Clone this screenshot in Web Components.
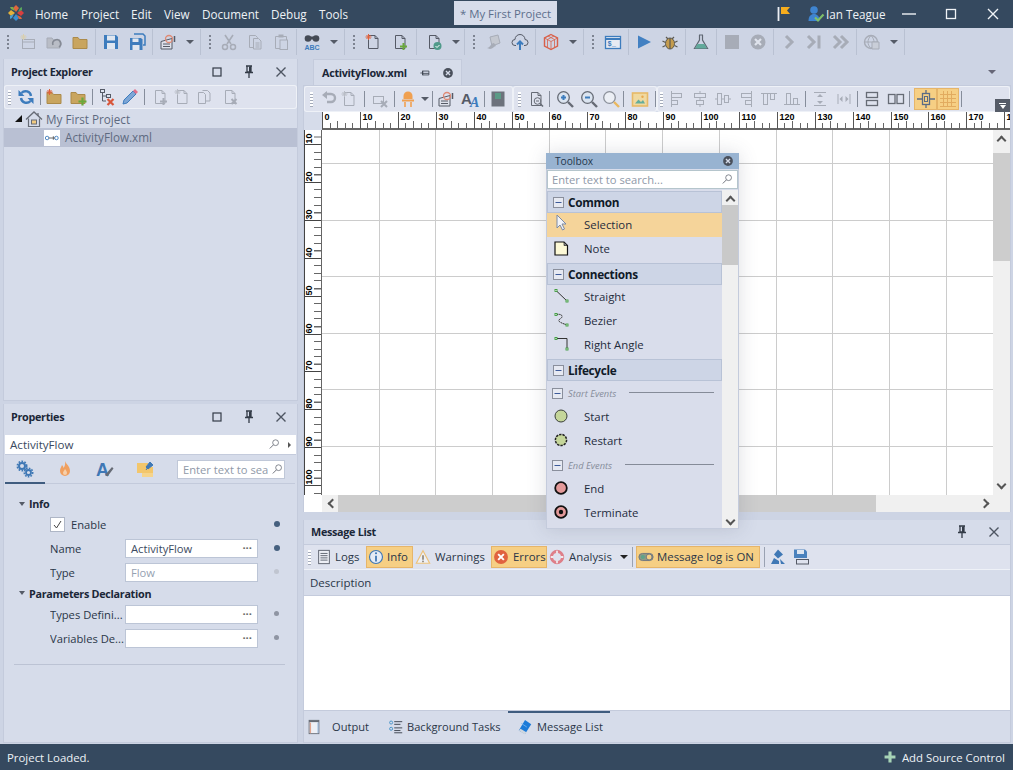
<!DOCTYPE html>
<html lang="en"><head><meta charset="utf-8"><title>Activity Flow</title>
<style>
html,body{margin:0;padding:0;height:100%;overflow:hidden;background:#cdd4e4}
body{font:12px "Open Sans","Noto Sans",sans-serif;color:#1f2c3d}
</style></head>
<body>
<x-app>
  <x-titlebar slot="top"></x-titlebar>
  <x-toolbar slot="top" u="26" bg="#cdd4e4" h="28" items="g:15 newproj openp folder | save saveall | recdoc a:17 | g cut copy paste | find a:17 | g new addfile:28 | checkdoc:30 a:13 | g:14 bugs cloud | cube a:17 | g:14 term | play bug | flask | stop cancel | next stepend fast | globe a:17 |"></x-toolbar>
  <x-panel slot="left" title="Project Explorer" style="height:342px">
    <x-toolbar u="24" bg="#dee2ee" h="24" round items="g:10 refresh:24 s:4 fnew:23 fadd:26 s:3 treex:26 pencil:20 s:8 dadd:24 dnew:20 dcopy:24 ddel:28"></x-toolbar>
    <x-tree></x-tree>
  </x-panel>
  <x-panel slot="left" title="Properties" style="height:339px;margin-top:3px">
    <x-props></x-props>
  </x-panel>
  <x-doc slot="right"></x-doc>
  <x-panel slot="right" title="Message List" nomax hh="24" style="height:223px;margin-top:8px"><x-messages></x-messages></x-panel>
  <x-status slot="bottom"></x-status>
  <x-toolbox slot="float">
    <x-tb-group label="Common"></x-tb-group>
    <x-tb-item icon="cursor" label="Selection" active></x-tb-item>
    <x-tb-item icon="note" label="Note"></x-tb-item>
    <x-tb-group label="Connections" gap></x-tb-group>
    <x-tb-item icon="straight" label="Straight"></x-tb-item>
    <x-tb-item icon="bezier" label="Bezier"></x-tb-item>
    <x-tb-item icon="rightangle" label="Right Angle"></x-tb-item>
    <x-tb-group label="Lifecycle" gap></x-tb-group>
    <x-tb-sub label="Start Events"></x-tb-sub>
    <x-tb-item icon="start" label="Start"></x-tb-item>
    <x-tb-item icon="restart" label="Restart"></x-tb-item>
    <x-tb-sub label="End Events"></x-tb-sub>
    <x-tb-item icon="end" label="End"></x-tb-item>
    <x-tb-item icon="terminate" label="Terminate"></x-tb-item>
  </x-toolbox>
</x-app>
<script>
const g='#a7acb7',d='#6c7280',b='#3d7cbd',fo='#c9a55f';
const st=(c,w=1)=>`fill="none" stroke="${c}" stroke-width="${w}"`;
const doc=c=>`<path d="M4.5 2.5h6.5l3 3v10h-9.5z" ${st(c)}/><path d="M11 2.5v3h3" ${st(c)}/>`;
const spark=(c='#e0603a')=>`<path d="M4.5 1v6M1.5 4h6M2.5 2l4 4M6.5 2l-4 4" ${st(c)}/>`;
const folder=(f=fo)=>`<path d="M2 4.5h5l1.5 2H16v9H2z" fill="${f}" stroke="#ab8a4a"/>`;
const sq=(x,y)=>`<rect x="${x}" y="${y}" width="2" height="2" fill="#fff" stroke="#3a9a3a" stroke-width=".9"/>`;
const ICONS={
newproj:`<rect x="3.5" y="6.5" width="12" height="9" ${st(g)}/><path d="M3.5 9h12" ${st(g)}/>`+spark('#d9cfae'),
openp:`<path d="M2 5h5l1.5 2H15v8H2z" fill="#b9bdc6" stroke="${g}"/><path d="M8 12a4 4 0 1 1 6 2" ${st('#858a95',1.6)}/>`,
folder:folder(),
save:`<path d="M2 2h12l2 2v12H2z" fill="${b}"/><rect x="5" y="2.5" width="8" height="5" fill="#dfe6f0"/><rect x="5" y="10" width="8" height="6" fill="#dfe6f0"/>`,
saveall:`<path d="M6 1h9l2 2v9h-2" ${st(b,1.5)}/><path d="M2 5h11l1.5 1.5V17H2z" fill="${b}"/><rect x="4.5" y="5.5" width="6" height="3.5" fill="#dfe6f0"/><rect x="4.5" y="12" width="7" height="5" fill="#dfe6f0"/>`,
recdoc:`<path d="M2 8.5l11-3V16H2z" fill="#dde1eb" stroke="#555a66"/><path d="M4 11h7M4 13.5h7" ${st('#555a66')}/><circle cx="10" cy="6" r="3.5" ${st('#e08a74',1.3)}/><path d="M15.5 3v6" ${st('#555a66',1.5)}/>`,
cut:`<path d="M5 2l6 9M13 2L7 11" ${st(g,1.6)}/><circle cx="5" cy="14" r="2.5" ${st(g,1.5)}/><circle cx="13" cy="14" r="2.5" ${st(g,1.5)}/>`,
copy:`<path d="M3.5 2.5h6l2 2v10h-8z" ${st(g)}/><path d="M7.5 5.5h5l2.5 2.5v8h-7.5z" fill="#cdd4e4" stroke="${g}"/><path d="M9.5 10h4M9.5 12h4M9.5 14h4" ${st(g)}/>`,
paste:`<path d="M3.5 3.5h11v12h-11z" ${st(g)}/><rect x="6.5" y="1.5" width="5" height="3" fill="${g}"/><rect x="8" y="7" width="7.5" height="9.5" fill="#cdd4e4" stroke="${g}"/>`,
find:`<circle cx="5" cy="5.5" r="3.3" fill="#444a55"/><circle cx="13" cy="5.5" r="3.3" fill="#444a55"/><rect x="7.5" y="3.5" width="3" height="3" fill="#444a55"/><text x="9" y="16.5" text-anchor="middle" font-family="Liberation Sans" font-weight="700" font-size="7" fill="${b}">ABC</text>`,
new:doc('#555a66')+spark(),
addfile:doc('#555a66')+`<path d="M12.5 10v7M9 13.5h7" ${st('#6aa83c',2)}/>`,
checkdoc:doc('#555a66')+`<circle cx="12.5" cy="13" r="4" fill="#4f9a8a"/><path d="M10.5 13l1.5 1.5 2.5-2.5" ${st('#fff')}/>`,
bugs:`<path d="M5 4l8-2 2 8-8 3z" fill="#c4c8d0" stroke="${g}"/><path d="M2 15c3 0 4-5 7-5l2 3c-2 0-3 3-6 3z" fill="${g}"/>`,
cloud:`<path d="M5 12.5H4a3 3 0 0 1 0-6 5 5 0 0 1 10 0 3 3 0 0 1 0 6h-1" ${st('#555a66')}/><path d="M9 17V9M6 11.5l3-3 3 3" ${st(b,2)}/>`,
cube:`<path d="M9 1.5l6.5 3.5v8L9 16.5 2.5 13V5z" ${st('#d8604a',1.4)}/><path d="M2.5 5L9 8.5 15.5 5M9 8.5v8M6 3l6.5 3.5v8M12 3L5.5 6.5v8" ${st('#d8604a',.8)}/>`,
term:`<rect x="1.5" y="3.5" width="15" height="12" fill="#e6eaf2" stroke="${b}" stroke-width="1.3"/><path d="M1.5 6h15" ${st(b,2)}/><text x="3.5" y="13" font-family="Liberation Mono" font-weight="700" font-size="7" fill="${b}">$_</text>`,
play:`<path d="M3 2.5l13 6.5-13 6.5z" fill="#4280c2"/>`,
bug:`<ellipse cx="9" cy="10.5" rx="4.5" ry="5.5" fill="#c59c4d" stroke="#5c5a52"/><path d="M9 5v11M5 4l2 2M13 4l-2 2M1.5 8l3 1.5M16.5 8l-3 1.5M1.5 14l3-1.5M16.5 14l-3-1.5" ${st('#5c5a52',1.2)}/>`,
flask:`<path d="M7 2h4M7.5 2v5L2.5 15.5h13L10.5 7V2" ${st('#5f6672',1.2)}/><path d="M5.5 11h7l2.5 4.5H3z" fill="#61a99b"/>`,
stop:`<rect x="2" y="2" width="14" height="14" fill="${g}"/>`,
cancel:`<circle cx="9" cy="9" r="7.5" fill="${g}"/><path d="M6 6l6 6M12 6l-6 6" ${st('#dfe3ec',2.2)}/>`,
next:`<path d="M6 3l6 6-6 6" ${st(g,3)}/>`,
stepend:`<path d="M2 3l6 6-6 6" ${st(g,3)}/><path d="M13 2.5v13" ${st(g,3)}/>`,
fast:`<path d="M2 3l6 6-6 6M9 3l6 6-6 6" ${st(g,3)}/>`,
globe:`<circle cx="8" cy="9" r="6.5" ${st(g,1.4)}/><path d="M2 9h12M8 2.5c-4 4-4 9 0 13M8 2.5c4 4 4 9 0 13" ${st(g)}/><path d="M9 9h7v7H9z" fill="#c9ced8" stroke="${g}"/>`,
refresh:`<path d="M14 8a5.5 5.5 0 0 0-9.5-3" ${st(b,2.4)}/><path d="M4 10a5.5 5.5 0 0 0 9.5 3" ${st(b,2.4)}/><path d="M1.5 2v6h6zM16.5 16v-6h-6z" fill="${b}"/>`,
fnew:folder()+spark(),
fadd:folder()+`<path d="M13.5 9.5v8M9.5 13.5h8" ${st('#6aa83c',2.2)}/>`,
treex:`<rect x="2.5" y="1.5" width="4" height="3" ${st('#555a66')}/><rect x="8.5" y="6.5" width="4" height="3" ${st('#555a66')}/><path d="M4.5 4.5V13H8M4.5 8h4" ${st('#555a66')}/><path d="M9.5 11l6 6M15.5 11l-6 6" ${st('#d8563a',2.2)}/>`,
pencil:`<path d="M2 16l1-4L12 3l3 3-9 9z" fill="#7da6d6" stroke="${b}"/><path d="M12 3l2-2 3 3-2 2z" fill="#e2708a"/>`,
dadd:doc(g)+`<path d="M12.5 10v7M9 13.5h7" ${st(g,2)}/>`,
dnew:doc(g)+spark('#b9bdc6'),
dcopy:`<path d="M3.5 4.5h5l2 2v9h-7z" ${st(g)}/><path d="M7.5 2.5h5l2.5 2.5v8h-4" ${st(g)}/>`,
ddel:doc(g)+`<path d="M10.5 11l5 5M15.5 11l-5 5" ${st(g,2)}/>`,
undo:`<path d="M6 4h6a4 4 0 0 1 0 8H8" ${st(g,2.4)}/><path d="M8 0.5L3 4.5l5 4z" fill="${g}" transform="translate(0,.5)"/>`,
connx:`<rect x="2.5" y="6.5" width="10" height="7" ${st(g)}/><path d="M10 11l6 6M16 11l-6 6" ${st(g,2)}/>`,
bulb:`<path d="M4.5 9V6a4.5 4.5 0 0 1 9 0v3z" fill="#f0a050"/><rect x="3" y="9.5" width="12" height="2" fill="#f0a050"/><path d="M6 12v5M12 12v5" ${st('#f0a050',1.6)}/>`,
font:`<text x="0" y="14" font-family="Liberation Sans" font-weight="700" font-size="15" fill="#555a66">A</text><text x="9" y="17" font-family="Liberation Serif" font-style="italic" font-weight="700" font-size="14" fill="${b}">A</text>`,
book:`<rect x="2.5" y="1.5" width="13" height="15" fill="#6d727c"/><rect x="6" y="3" width="6" height="6" fill="#5b9a86"/>`,
zdoc:doc('#666b75')+`<circle cx="10.5" cy="11" r="3.3" fill="#dee2ee" stroke="#666b75"/><path d="M13 13.5l3 3" ${st('#666b75',1.6)}/><path d="M9 11h3" ${st('#666b75')}/>`,
zin:`<circle cx="7.5" cy="7.5" r="5.8" fill="#dbe4f0" stroke="#666b75" stroke-width="1.3"/><path d="M5 7.5h5M7.5 5v5" ${st(b,2)}/><path d="M12 12l5 5" ${st('#666b75',2.4)}/>`,
zout:`<circle cx="7.5" cy="7.5" r="5.8" fill="#dbe4f0" stroke="#666b75" stroke-width="1.3"/><path d="M5 7.5h5" ${st(b,2)}/><path d="M12 12l5 5" ${st('#666b75',2.4)}/>`,
zm:`<circle cx="7.5" cy="7.5" r="5.8" fill="#eceff5" stroke="#8c919b" stroke-width="1.3"/><path d="M12 12l5 5" ${st('#eab85f',2.4)}/>`,
pic:`<rect x="1.5" y="3" width="15" height="13" fill="#f0d9a0" stroke="#e7b968" stroke-width="1.6"/><path d="M4 13.5l3.5-4 2.5 2.5 2-2 2 3.5z" fill="#64ad9c"/><circle cx="11.5" cy="6.8" r="1.2" fill="#e8a84e"/>`,
al:`<path d="M3.5 1v16" ${st(g)}/><rect x="3.5" y="3.5" width="10" height="4" ${st(g)}/><rect x="3.5" y="10.5" width="6" height="4" ${st(g)}/>`,
ac:`<path d="M9 1v16" ${st(g)}/><rect x="3.5" y="3.5" width="11" height="4" fill="#dee2ee" stroke="${g}"/><rect x="5.5" y="10.5" width="7" height="4" fill="#dee2ee" stroke="${g}"/>`,
am:`<path d="M1 9h16" ${st(g)}/><rect x="3.5" y="3.5" width="4" height="11" fill="#dee2ee" stroke="${g}"/><rect x="10.5" y="5.5" width="4" height="7" fill="#dee2ee" stroke="${g}"/>`,
ar:`<path d="M14.5 1v16" ${st(g)}/><rect x="4.5" y="3.5" width="10" height="4" ${st(g)}/><rect x="8.5" y="10.5" width="6" height="4" ${st(g)}/>`,
at:`<path d="M1 3.5h16" ${st(g)}/><rect x="3.5" y="3.5" width="4" height="11" ${st(g)}/><rect x="10.5" y="3.5" width="4" height="6" ${st(g)}/>`,
ab:`<path d="M1 14.5h16" ${st(g)}/><rect x="3.5" y="3.5" width="4" height="11" ${st(g)}/><rect x="10.5" y="8.5" width="4" height="6" ${st(g)}/>`,
vd:`<path d="M3 2.5h12M3 15.5h12" ${st(g)}/><path d="M9 4l-3 3h6zM9 14l-3-3h6z" fill="${g}"/>`,
hd:`<path d="M3 4v10M15 4v10" ${st(g)}/><path d="M4.5 9l3-3v6zM13.5 9l-3-3v6z" fill="${g}"/>`,
r2:`<rect x="3.5" y="2.5" width="11" height="5" ${st('#666b75',1.3)}/><rect x="3.5" y="10.5" width="11" height="5" ${st('#666b75',1.3)}/>`,
c2:`<rect x="1.5" y="4.5" width="6.5" height="9" ${st('#666b75',1.3)}/><rect x="10" y="4.5" width="6.5" height="9" ${st('#666b75',1.3)}/>`,
snap:`<rect x="5.5" y="3.5" width="7" height="11" ${st('#5b6c85',1.3)}/><rect x="7.5" y="6.5" width="3" height="5" ${st('#5b6c85')}/><path d="M9 0v3.5M9 14.5V18M0 9h5.5M12.5 9H18" ${st('#5b6c85',1.3)}/>`,
grid:`<path d="M1 4.5h16M1 8.5h16M1 12.5h16M1 16.5h16M4.5 1v16M8.5 1v16M12.5 1v16" ${st('#e2ab5f')}/>`,
search:`<circle cx="10.5" cy="6.5" r="4" ${st('#666b75',1.1)}/><path d="M7.5 9.5l-5 5" ${st('#666b75',1.3)}/>`,
gears:`<circle cx="6" cy="6" r="3" ${st('#3f78b5',2)}/><circle cx="6" cy="6" r="4.7" fill="none" stroke="#3f78b5" stroke-width="1.6" stroke-dasharray="1.7 1.3"/><circle cx="12.5" cy="12.5" r="2.5" ${st('#3f78b5',1.8)}/><circle cx="12.5" cy="12.5" r="4.2" fill="none" stroke="#3f78b5" stroke-width="1.6" stroke-dasharray="1.6 1.2"/>`,
flame:`<path d="M9 1c1 3 5 5 5 10a5 5 0 0 1-10 0c0-3 1.5-4 2-6 1 1 1.5 2 1.5 3C9 6 9.5 3.5 9 1z" fill="#f0a060"/><path d="M9 9c1 1.5 2 2.5 2 4a2 2 0 0 1-4 0c0-1.5 1.5-2.5 2-4z" fill="#f7d0aa"/>`,
fontb:`<text x="0" y="16" font-family="Liberation Sans" font-weight="700" font-size="18" fill="#3f78b5">A</text><path d="M9 15l7-8 1.5 1.5-6 8z" fill="#666b75"/>`,
sticky:`<path d="M1 3h11v4h5v10H6v-4H1z" fill="#f3c66b"/><path d="M6 13h11v4H6z" fill="#f6d48b"/><path d="M10 7l4-5 3 3-5 4zM10 10l2-3" fill="#3f78b5" stroke="#3f78b5"/>`,
logs:`<rect x="3" y="1.5" width="12" height="15" fill="#eef0f6" stroke="#555a66"/><path d="M5 5h8M5 7.5h8M5 10h8M5 12.5h8" ${st('#555a66')}/>`,
info:`<circle cx="9" cy="9" r="7.3" fill="#e6ecf5" stroke="#3f78b5" stroke-width="1.3"/><path d="M9 7.5V14" ${st('#3f78b5',2)}/><circle cx="9" cy="4.8" r="1.2" fill="#3f78b5"/>`,
warn:`<path d="M9 2l7.5 14h-15z" fill="#eef0f6" stroke="#edc27a" stroke-width="1.3"/><path d="M9 7v5" ${st('#8a8172',1.8)}/><circle cx="9" cy="14" r="1" fill="#8a8172"/>`,
err:`<circle cx="9" cy="9" r="7.8" fill="#e0623f"/><path d="M5.8 5.8l6.4 6.4M12.2 5.8l-6.4 6.4" ${st('#fff',2.2)}/>`,
lifering:`<circle cx="9" cy="9" r="6" ${st('#e07f88',3)}/><path d="M9 1v4M9 13v4M1 9h4M13 9h4" ${st('#f0e9ec',2)}/><circle cx="9" cy="9" r="7.6" ${st('#d9707b',.8)}/>`,
toggle:`<rect x="1" y="5" width="16" height="8" rx="4" fill="#8d9a85" stroke="#6a7280"/><circle cx="12.5" cy="9" r="3.3" fill="#f6cf84" stroke="#6a7280"/><circle cx="5.5" cy="9" r="2.3" fill="#5ea38a"/>`,
broom:`<path d="M9 1.5l5 5-5 4-4-4z" fill="#3f78b5"/><path d="M11 11l5 5h-4zM2 16l3-6 5 3v3z" fill="#3f78b5"/>`,
savebox:`<path d="M2 1.5h11l2 2V10H2z" fill="#4b82bd"/><rect x="5" y="2" width="7" height="4" fill="#dfe6f0"/><rect x="4.5" y="11.5" width="12" height="4.5" fill="#dee2ee" stroke="#555a66"/>`,
output:`<rect x="3.5" y="1.5" width="11" height="15" fill="#eef0f6" stroke="#666b75"/><path d="M3.5 1.5h11v2h-11z" fill="#666b75"/><path d="M5 4v12" ${st('#e2a48c',1.4)}/><path d="M13.5 4v12" ${st('#8fb2dc',1)}/>`,
tasks:`<circle cx="3.5" cy="4" r="1.7" ${st('#3f8fc7')}/><circle cx="3.5" cy="11" r="1.7" ${st('#3f8fc7')}/><path d="M7 3h9M7 6h7M7 10h9M7 13h7M7 15.5h9" ${st('#444a55',1.1)}/>`,
mbook:`<path d="M2 13L9 1l7 5-7 11z" fill="#1d7bd8"/><path d="M2 13l7 4.5 1.5-2.5L4 11z" fill="#cfd6de"/><path d="M5 5l6 4" ${st('#70b5f0')}/>`,
house:`<path d="M1 9.5L9 2l8 7.5" ${st('#666b75',1.3)}/><path d="M3.5 8.5V16.5h11V8.5" ${st('#666b75',1.2)}/><rect x="6.5" y="10" width="5" height="4" fill="#f0ca80" stroke="#666b75"/><path d="M13 3v3" ${st('#666b75',1.3)}/>`,
flow:`<circle cx="3.5" cy="9" r="2" ${st(b)}/><circle cx="14" cy="9" r="2" ${st(b)}/><path d="M5.5 9H12" ${st('#555')}/><path d="M10.5 7v4" ${st('#555')}/>`,
cursor:`<path transform="translate(2,-1)" d="M3 1v13l3-3 2.500 5 2-1-2.500-5H12z" fill="#f2f4f8" stroke="#7b8aa6"/>`,
note:`<path d="M3 3h9l3.500 3.500V16H3z" fill="#fdf9d6" stroke="#111" stroke-width="1.2"/><path d="M12 3v3.500h3.500z" fill="#888" stroke="#111" stroke-width=".6"/>`,
straight:`<path d="M4 3.500L15 14" ${st('#333')}/>`+sq(3,2.5)+sq(14,13),
bezier:`<path d="M4 3.500c6-1 8 2 4 4.500-4 2.500 3 4.500 7 6" ${st('#333')} stroke-dasharray="2 .5"/>`+sq(3,2.5)+sq(14,13),
rightangle:`<path d="M4 3.500h11V14" ${st('#333')}/>`+sq(3,2.5)+sq(14,13),
start:`<circle cx="9" cy="9" r="6" fill="#c5d69a" stroke="#3a3f3a"/>`,
restart:`<circle cx="9" cy="9" r="5.600" fill="#c5d69a" stroke="#222" stroke-width="1.5" stroke-dasharray="2.4 1"/>`,
end:`<circle cx="9" cy="9" r="5.800" fill="#e49a9a" stroke="#111" stroke-width="1.8"/>`,
terminate:`<circle cx="9" cy="9" r="5.800" fill="#e49a9a" stroke="#111" stroke-width="1.8"/><circle cx="9" cy="9" r="2.2" fill="#111"/>`,
logo:`<path d="M9 1l3 3-3 4-3-4z" fill="#e0663c"/><path d="M17 9l-3 3-4-3 4-3z" fill="#d93f3f"/><path d="M9 17l-3-3 3-4 3 4z" fill="#3a8ecf"/><path d="M1 9l3-3 4 3-4 3z" fill="#e3b23a"/><path d="M3 3h3l2 4-4-2z" fill="#79ad4c"/><path d="M15 3v3l-4 2 2-4z" fill="#58a55c"/><path d="M15 15h-3l-2-4 4 2z" fill="#e0663c"/><path d="M3 15v-3l4-2-2 4z" fill="#4a9ed0"/>`,
flag:`<path d="M2.5 2v14" ${st('#eceff4',1.8)}/><path d="M5 2h9l-3 3.5 3 3.5H5z" fill="#f6ad1d"/>`,
user:`<circle cx="7" cy="5" r="3.8" fill="#3f84cf"/><path d="M1.5 16c0-5 2.5-7 5.5-7s5.5 2 5.5 7z" fill="#3f84cf"/><path d="M8 12.5l3 3 5.5-6" ${st('#7fc06a',2.2)}/>`,
min:`<path d="M2 9h14" ${st('#f0f3f7',1.4)}/>`,
max:`<rect x="4.5" y="4.5" width="9" height="9" ${st('#f0f3f7',1.3)}/>`,
closew:`<path d="M4 4l10 10M14 4L4 14" ${st('#f0f3f7',1.4)}/>`,
pmax:`<rect x="5" y="5" width="8" height="8" ${st('#333b47',1.2)}/>`,
ppin:`<path d="M6 3h6M7 3v6h4V3M5 9.5h8M9 10v5" ${st('#333b47',1.3)}/><path d="M9 3.5h2V9H9z" fill="#333b47"/>`,
pclose:`<path d="M4.5 4.5l9 9M13.5 4.5l-9 9" ${st('#4d5562',1.4)}/>`,
tabpin:`<path d="M3 9h3M6 6v6M6 6.5h8v5H6zM6 9.5h8" ${st('#333b47',1)}/>`,
tabclose:`<circle cx="9" cy="9" r="5.5" fill="#4a505c"/><path d="M6.7 6.7l4.6 4.6M11.3 6.7l-4.6 4.6" ${st('#d6dcea',1.5)}/>`,
plus:`<path d="M9 2v14M2 9h14" ${st('#a7d3b6',4)}/>`
};
function def(tag,css,html,setup){
  customElements.define(tag,class extends HTMLElement{
    constructor(){super();this.attachShadow({mode:'open'})}
    connectedCallback(){
      if(this._r)return;this._r=1;
      const a=n=>this.getAttribute(n);
      this.shadowRoot.innerHTML=`<style>${css}</style>`+(typeof html==='function'?html(a,this):html);
      if(setup)setup(this,a);
    }
  });
}
const ic=(n,s=18,extra='')=>`<x-ic n="${n}" s="${s}" ${extra}></x-ic>`;
const BOLD='font-weight:700;font-size:10.8px;letter-spacing:-.3px;';
def('x-ic',':host{display:inline-flex;flex:none;align-items:center;justify-content:center}svg{display:block;overflow:visible}',
 a=>`<svg width="${a('s')||18}" height="${a('s')||18}" viewBox="0 0 18 18" aria-hidden="true">${ICONS[a('n')]||''}</svg>`);

def('x-app',`:host{display:flex;flex-direction:column;position:relative;width:1013px;height:770px;overflow:hidden;background:#cdd4e4}
 .main{flex:1;display:grid;grid-template-columns:295px 708px;column-gap:5px;padding:3px 2px 1px 3px;min-height:0}
 .col{display:flex;flex-direction:column;min-height:0}
 .float{position:absolute;left:546px;top:153px}`,
 `<slot name="top"></slot><div class="main"><div class="col"><slot name="left"></slot></div><div class="col"><slot name="right"></slot></div></div><slot name="bottom"></slot><div class="float"><slot name="float"></slot></div>`);

def('x-titlebar',`:host{display:flex;align-items:center;height:28px;background:#35495f;color:#eef2f6;flex:none;font-size:11.7px}
 .logo{margin:0 10px 0 7px}
 .m{flex:none;white-space:nowrap}
 .doc{flex:none;height:24px;margin:-2px 0 0 100px;width:103px;background:#d6dcea;color:#5d6f8c;display:flex;align-items:center;justify-content:center;white-space:nowrap;font-size:11.4px}
 .r{margin-left:auto;display:flex;align-items:center}
 .name{width:62px;margin-left:1px;white-space:nowrap}
 .wb{width:42px;display:flex;justify-content:center}`,
 ()=>`<div class="logo">${ic('logo')}</div>
 <span class="m" style="width:46px">Home</span><span class="m" style="width:50px">Project</span><span class="m" style="width:33px">Edit</span><span class="m" style="width:38px">View</span><span class="m" style="width:69px">Document</span><span class="m" style="width:48px">Debug</span><span class="m" style="width:35px">Tools</span>
 <div class="doc">* My First Project</div>
 <div class="r">${ic('flag')}<span style="width:13px"></span>${ic('user')}<span class="name">Ian Teague</span><div class="wb">${ic('min')}</div><div class="wb">${ic('max')}</div><div class="wb" style="margin-right:-1px">${ic('closew')}</div></div>`);

def('x-toolbar',`:host{display:flex;align-items:center;flex:none;box-sizing:border-box;position:relative}
 :host([round]){border-radius:3px;box-shadow:0 0 0 1px #eef1f7 inset}
 .i{display:flex;align-items:center;justify-content:center;flex:none;height:100%}
 .sep{flex:none;display:flex;justify-content:center;align-self:stretch;align-items:center}
 .sep i{display:block;width:1px;height:calc(100% - 2px);background:#b9c1d2}
 :host([round]) .sep i{height:16px;background:#868d9b}
 .grip{flex:none;display:flex;justify-content:center;align-self:center}
 .grip i{display:block;width:2px;height:14px;background:repeating-linear-gradient(#7d8391 0 2px,transparent 2px 4px)}
 :host([round]) .grip i{width:3px;height:15px;background:repeating-linear-gradient(#fff 0 2px,#a4abba 2px 3px)}
 .arrow{width:0;height:0;border:4px solid transparent;border-top:4px solid #555b67;border-bottom:0}
 .on{height:22px;box-sizing:border-box;background:#f6cf84;border:1px solid #e6b56a}`,
 (a,h)=>{
  const u=+a('u')||26;
  const out=(a('items')||'').trim().split(/\s+/).map(t=>{
    let [n,w]=t.split(':');let on=false;
    if(w&&w.endsWith('!')){on=true;w=w.slice(0,-1)}
    if(n==='|'||n==='s'){return `<div class="sep" style="width:${w||5}px"><i></i></div>`}
    if(n==='_'){return `<div style="flex:none;width:${w}px"></div>`}
    if(n==='g'){return `<div class="grip" style="width:${w||13}px"><i></i></div>`}
    if(n==='a'){return `<div class="i" style="width:${w||17}px"><div class="arrow"></div></div>`}
    return `<div class="i${on?' on':''}" style="width:${w||u}px">${ic(n,a('is')||18)}</div>`;
  }).join('');
  h.style.height=(a('h')||26)+'px';h.style.background=a('bg')||'#dee2ee';
  return out+'<slot></slot>';
 });

def('x-panel',`:host{display:flex;flex-direction:column;flex:none;box-sizing:border-box;background:#d6dcea;border:1px solid #c4cbdc;border-top:0;min-height:0}
 .h{flex:none;height:26px;box-sizing:border-box;display:flex;align-items:center;color:#1b2738;padding-left:7px;${BOLD}}
 .t{flex:1;padding-bottom:2px}.c{width:32px;display:flex;justify-content:center}
 .b{flex:1;display:flex;flex-direction:column;min-height:0}`,
 (a,h)=>`<div class="h" style="height:${a('hh')||26}px"><span class="t">${a('title')}</span>${h.hasAttribute('nomax')?'':`<div class="c">${ic('pmax')}</div>`}<div class="c">${ic('ppin')}</div><div class="c">${ic('pclose')}</div></div><div class="b"><slot></slot></div>`);

def('x-tree',`:host{display:block;color:#5e6a80;font-size:11.7px}
 .r{height:19px;display:flex;align-items:center;white-space:nowrap}
 .tri{width:0;height:0;margin-left:11px;border-left:7px solid transparent;border-bottom:7px solid #111;margin-right:3px}
 .sel{background:#b9c0d3}.sel span{padding-bottom:1px}
 .box{width:16px;height:16px;background:#fff;display:flex;align-items:center;justify-content:center;margin:0 5px 0 40px}`,
 ()=>`<div class="r"><div class="tri"></div>${ic('house')}<span style="margin-left:3px">My First Project</span></div>
 <div class="r sel"><div class="box">${ic('flow',16)}</div><span>ActivityFlow.xml</span></div>`);

const prop=(label,val,o={})=>`<div class="row"><span class="lab">${label}</span><div class="inp${o.dim?' dim':''}"><span>${val}</span>${o.dots?'<b>···</b>':''}</div><i class="dot ${o.dot||''}"></i></div>`;
def('x-props',`:host{display:flex;flex-direction:column;flex:1;font-size:11.2px;color:#2a3648}
 .top{height:20px;margin:5px 1px 0 1px;background:#fff;display:flex;align-items:center;padding:0 5px 0 5px;font-size:11.6px;color:#3b4a60;border-bottom:1px solid #c4cbdc;flex:none;box-sizing:border-box}
 .top span{flex:1}
 .tri{width:0;height:0;border-left:3px solid #555;border-top:3px solid transparent;border-bottom:3px solid transparent;margin-left:7px}
 .tabs{height:29px;display:flex;align-items:center;border-bottom:1px solid #c3cadb;margin:0 2px 0 1px;position:relative;flex:none;box-sizing:border-box}
 .tab{width:40px;display:flex;justify-content:center;flex:none;align-self:stretch;align-items:center;box-sizing:border-box}
 .tab.on{border-bottom:2px solid #3f5c7f;margin-bottom:-1px}
 .sb{margin-left:12px;width:108px;height:19px;box-sizing:border-box;background:#fff;border:1px solid #c0c8d8;display:flex;align-items:center;color:#8f99a8;padding-left:5px;overflow:hidden;white-space:nowrap;font-size:11.2px;justify-content:space-between}
 .grp{height:17px;display:flex;align-items:center;color:#1b2738;padding-left:25px;position:relative;${BOLD}}
 .grp:before{content:"";position:absolute;left:15px;top:calc(50% - 2px);border:3px solid transparent;border-top:4px solid #555b67;border-bottom:0}
 .row{height:24px;display:flex;align-items:center;padding-left:46px;position:relative;white-space:nowrap}
 .lab{width:75px;flex:none;overflow:hidden}
 .inp{width:133px;height:19px;box-sizing:border-box;background:#fff;border:1px solid #bcc5d6;display:flex;align-items:center;justify-content:space-between;padding:0 5px;color:#3b4a60;font-size:11.2px}
 .inp.dim{color:#96a1b2}.inp b{letter-spacing:0;font-weight:700;color:#666;line-height:1}
 .dot{position:absolute;left:270px;top:9px;width:5px;height:5px;border-radius:50%;background:#8f95a3}
 .dot.big{width:6px;height:6px;background:#46607f;top:9px}
 .dot.faint{background:#c0c5d0}
 .chk{width:15px;height:15px;box-sizing:border-box;background:#fff;border:1px solid #aeb6c6;display:flex;align-items:center;justify-content:center;margin-right:6px}
 hr{border:0;border-top:1px solid #bcc3d4;margin:14px 12px 0 10px}`,
 ()=>`<div class="top"><span>ActivityFlow</span>${ic('search',13)}<div class="tri"></div></div>
 <div class="tabs"><div class="tab on">${ic('gears')}</div><div class="tab">${ic('flame')}</div><div class="tab">${ic('fontb')}</div><div class="tab">${ic('sticky')}</div><div class="sb">Enter text to sea${ic('search',13)}</div></div>
 <div style="height:11px"></div>
 <div class="grp">Info</div>
 <div class="row"><div class="chk"><svg width="11" height="11" viewBox="0 0 11 11"><path d="M2 6l2.5 3L9 2" fill="none" stroke="#444"/></svg></div><span>Enable</span><i class="dot big"></i></div>
 ${prop('Name','ActivityFlow',{dots:1,dot:'big'})}${prop('Type','Flow',{dim:1,dot:'faint'})}
 <div class="grp" style="height:18px;padding-top:1px;box-sizing:border-box">Parameters Declaration</div>
 ${prop('Types Defini...','',{dots:1})}${prop('Variables De...','',{dots:1})}<hr>`);

def('x-ruler-h',`:host{display:block;flex:1;height:18px;background:#fff;overflow:hidden}svg{display:block}`,()=>{
 let s='';const P=37.9;
 for(let k=0;k<19;k++){const x=Math.round(k*P)+.5;
  s+=`<path d="M${x} 0v17" stroke="#555"/><text x="${x+2}" y="8" font-family="Liberation Sans" font-weight="700" font-size="9" fill="#000">${k*10}</text>`;
  for(let m=1;m<5;m++){const t=Math.round(k*P+m*P/5)+.5;s+=`<path d="M${t} ${m==2?9:11}V17" stroke="#666"/>`}
 }
 return `<svg width="688" height="18"><path d="M0 17h688" stroke="#666" stroke-width="2"/>${s}</svg>`});
def('x-ruler-v',`:host{display:block;width:18px;background:#fff;overflow:hidden;flex:none}svg{display:block}`,()=>{
 let s='';const P=37.9;
 for(let k=1;k<11;k++){const y=Math.round(14+(k-1)*P)+.5;
  s+=`<path d="M0 ${y}h17" stroke="#444"/><text transform="translate(8,${y-1}) rotate(-90)" font-family="Liberation Sans" font-weight="700" font-size="9" fill="#000">${k*10}</text>`;
  for(let m=1;m<5;m++){const t=Math.round(14+(k-1)*P+m*P/5)+.5;s+=`<path d="M10 ${t}H17" stroke="#666"/>`}
  s+=`<path d="M10 ${y-7.5}H17" stroke="#666"/>`;
 }
 return `<svg width="18" height="365"><path d="M.5 0v365" stroke="#444"/><path d="M17.5 0v365" stroke="#666"/>${s}</svg>`});

def('x-doc',`:host{display:flex;flex-direction:column;flex:none;height:453px}
 .strip{height:26px;display:flex;align-items:flex-end;flex:none;padding-left:10px;position:relative}
 .tab{width:149px;height:26px;box-sizing:border-box;background:#d6dcea;border:1px solid #c4cbdc;border-bottom:0;display:flex;align-items:center;padding-left:8px;color:#1b2738;white-space:nowrap;${BOLD}}
 .tab span{width:96px}.tab x-ic:last-child{margin-left:8px}
 .ov{position:absolute;right:15px;top:11px;border:4px solid transparent;border-top:4px solid #667;border-bottom:0}
 .frame{flex:1;display:flex;flex-direction:column;border:1px solid #c4cbdc;border-bottom:0;min-height:0;background:#d6dcea}
 .bars{display:flex;height:26px;flex:none;position:relative}
 .bars x-toolbar{flex:none}
 .over{position:absolute;right:0;top:13px;width:15px;height:13px;background:#555b67;display:flex;flex-direction:column;align-items:center;justify-content:center}
 .over:before{content:"";width:7px;height:1px;background:#fff;margin-bottom:1px}
 .over:after{content:"";border:3px solid transparent;border-top:4px solid #fff;border-bottom:0}
 .rul{display:flex;height:18px;flex:none;align-items:stretch}
 .corner{width:18px;flex:none;background:#d6dcea}
 .body{flex:1;display:flex;min-height:0}
 .area{flex:1;display:grid;grid-template-columns:1fr 17px;grid-template-rows:1fr 17px;min-width:0;background:#f0f0f0}
 .cv{background-color:#fff;position:relative;overflow:hidden}
 .sv{background:#f0f0f0;display:flex;flex-direction:column;align-items:center;position:relative}
 .sh{background:#f0f0f0;display:flex;align-items:center;position:relative}
 .th{position:absolute;background:#cdcdcd}
 .ch{position:absolute;width:7px;height:7px;box-sizing:border-box;border-left:2px solid #555;border-top:2px solid #555}
 .lines{position:absolute;inset:0}`,
 ()=>{
  let lines='';
  for(let i=0;i<11;i++)lines+=`<path d="M${Math.round(56.5+56.72*i)+.5} 0v365" stroke="#ccc"/>`;
  for(let i=0;i<6;i++)lines+=`<path d="M0 ${Math.round(33+56.6*i)+.5}h672" stroke="#ccc"/>`;
  return `<div class="strip"><div class="tab"><span>ActivityFlow.xml</span>${ic('tabpin',14)}${ic('tabclose',16)}</div><div class="ov"></div></div>
  <div class="frame">
   <div class="bars">
   <x-toolbar u="23" h="26" bg="#dee2ee" round items="g:14 undo:19 dnew:24 s:6 connx:26 s:3 bulb:23 a:12 s:3 recdoc:24 font:24 s:4 book:24 _:3"></x-toolbar>
   <x-toolbar u="23" h="26" bg="#dee2ee" round items="g:12 zdoc:22 s:5 zin:26 zout:22 zm:21 s:5 pic:27 s:4"></x-toolbar>
   <x-toolbar u="23" h="26" bg="#dee2ee" round style="flex:1" items="g:8 al ac am ar at ab s:4 vd:25 hd s:4 r2:25 c2 s:4 _:3 snap:23! grid:22! s:5"></x-toolbar>
   <div class="over"></div></div>
   <div class="rul"><div class="corner"></div><x-ruler-h></x-ruler-h></div>
   <div class="body"><x-ruler-v></x-ruler-v>
    <div class="area">
     <div class="cv"><svg class="lines" width="672" height="365">${lines}</svg></div>
     <div class="sv"><div class="ch" style="top:7px;transform:rotate(45deg)"></div><div class="th" style="top:23px;height:108px;left:0;right:0"></div><div class="ch" style="bottom:7px;transform:rotate(225deg)"></div></div>
     <div class="sh"><div class="ch" style="left:7px;transform:rotate(-45deg)"></div><div class="th" style="left:16px;width:538px;top:0;bottom:0"></div><div class="ch" style="right:5px;transform:rotate(135deg)"></div></div>
     <div style="background:#f0f0f0"></div>
    </div>
   </div>
  </div>`});

const mb=(w,ml,icon,text,on,gap=3)=>`<div class="mb${on?' on':''}" style="width:${w}px;margin-left:${ml}px;gap:${gap}px">${ic(icon,16)}<span>${text}</span></div>`;
def('x-messages',`:host{display:flex;flex-direction:column;flex:1;min-height:0;font-size:11.5px;color:#2a3648}
 .bar{height:26px;background:#dee2ee;display:flex;align-items:center;flex:none;border-top:1px solid #c4cbdc;border-bottom:1px solid #eef1f7;box-sizing:border-box;position:relative}
 .grip{width:3px;height:15px;background:repeating-linear-gradient(#fff 0 2px,#a4abba 2px 3px);margin:0 0 0 4px;flex:none}
 .mb{height:22px;box-sizing:border-box;display:flex;align-items:center;flex:none;white-space:nowrap;font-size:11.4px}
 .mb span{padding-bottom:1px}
 .mb.on{background:#f6cf84;border:1px solid #e6b56a;padding-left:1px}
 .sep{width:1px;height:20px;background:#9aa2b2;flex:none}
 .ar{border:4px solid transparent;border-top:4px solid #222;border-bottom:0;flex:none}
 .hd{height:26px;display:flex;align-items:center;padding-left:6px;flex:none;background:#d6dcea;border-bottom:1px solid #c4cbdc;box-sizing:border-box}
 .white{flex:1;background:#fff;border-bottom:1px solid #c4cbdc}
 .tabs{height:31px;display:flex;flex:none;align-items:stretch;color:#2a3648;font-size:11.1px}
 .t{display:flex;align-items:center;height:31px;box-sizing:border-box;flex:none;white-space:nowrap}
 .t.on{border-top:2px solid #3f5c7f;padding-bottom:2px}`,
 ()=>`<div class="bar"><div class="grip"></div>
 ${mb(46,5,'logs','Logs')}${mb(47,4,'info','Info',1)}${mb(72,2,'warn','Warnings',0,4)}${mb(56,4,'err','Errors',1,4)}${mb(65,2,'lifering','Analysis',0,4)}
 <div class="ar" style="margin-left:6px"></div><div class="sep" style="margin-left:4px"></div>
 ${mb(124,3,'toggle','Message log is ON',1)}<div class="sep" style="margin-left:4px"></div>
 <span style="margin-left:4px;display:flex">${ic('broom',18)}</span><span style="margin-left:5px;display:flex">${ic('savebox',18)}</span></div>
 <div class="hd">Description</div><div class="white"></div>
 <div class="tabs"><div class="t" style="width:84px;padding-left:2px;gap:10px">${ic('output',16)}<span>Output</span></div><div class="t" style="width:120px;gap:3px">${ic('tasks',16)}<span>Background Tasks</span></div><div class="t on" style="width:102px;padding-left:9px;gap:4px">${ic('mbook',16)}<span>Message List</span></div></div>`);

def('x-status',`:host{display:flex;align-items:center;height:26px;background:#35495f;color:#eef2f6;flex:none;padding:0 8px 0 7px;font-size:11.4px;white-space:nowrap}
 .r{margin-left:auto;display:flex;align-items:center;gap:5px}`,
 ()=>`<span>Project Loaded.</span><div class="r">${ic('plus',14)}<span>Add Source Control</span></div>`);

def('x-toolbox',`:host{display:flex;flex-direction:column;width:193px;height:376px;box-sizing:border-box;background:#d9ddeb;border:1px solid #c4cbdc;border-top:0;box-shadow:0 0 18px rgba(70,80,100,.18);font-size:11.4px;color:#1f2c3d}
 .title{height:16px;background:#98b3d1;display:flex;align-items:center;padding:0 3px 0 9px;color:#24364c;flex:none;font-size:10.2px;justify-content:space-between;margin:0 -1px}
 .s{height:19px;background:#fff;border:1px solid #b5c5cc;box-sizing:border-box;display:flex;align-items:center;justify-content:space-between;color:#8f99a8;padding:0 3px 1px 4px;flex:none;font-size:11.2px;margin-top:1px}
 .list{flex:1;display:flex;min-height:0;margin-top:1px}
 .items{width:175px;flex:none;padding-top:1px;overflow:hidden}
 .sc{flex:1;background:#f0f0f0;position:relative;margin:0}
 .th{position:absolute;left:0;right:0;top:15px;height:60px;background:#c9c9c9}
 .ch{position:absolute;left:5px;width:7px;height:7px;box-sizing:border-box;border-left:2px solid #555;border-top:2px solid #555}`,
 ()=>`<div class="title"><span>Toolbox</span>${ic('tabclose',16)}</div>
 <div class="s"><span>Enter text to search...</span>${ic('search',13)}</div>
 <div class="list"><div class="items"><slot></slot></div><div class="sc"><div class="ch" style="top:7px;transform:rotate(45deg)"></div><div class="th"></div><div class="ch" style="bottom:4px;transform:rotate(225deg)"></div></div></div>`);
const minus=`<svg width="11" height="11" viewBox="0 0 11 11" style="flex:none"><rect x=".5" y=".5" width="10" height="10" fill="#e6e9f2" stroke="#8a8f9c"/><path d="M2.5 5.5h6" stroke="#3c5a9a"/></svg>`;
def('x-tb-group',`:host{display:flex;align-items:center;box-sizing:border-box;height:22px;background:#cdd5e6;border:1px solid #b8c2d6;font-weight:700;font-size:11.8px;letter-spacing:-.3px;padding:1px 0 0 5px;gap:4px;color:#101a28}
 :host([gap]){margin-top:2px}span{padding-bottom:1px}`,
 a=>`${minus}<span>${a('label')}</span>`);
def('x-tb-item',`:host{display:flex;align-items:center;box-sizing:border-box;height:24px;padding:0 0 2px 5px;gap:12px;white-space:nowrap}
 :host([active]){background:#f5d49a}x-ic{margin-right:2px}`,
 a=>`${ic(a('icon'),18)}<span>${a('label')}</span>`);
def('x-tb-sub',`:host{display:flex;align-items:center;height:24px;padding-left:5px;color:#878d9b;font-style:italic;font-size:9.3px;gap:5px;white-space:nowrap}
 i{flex:1;height:1px;background:#858b98;margin:0 8px 2px 8px}`,
 a=>`${minus}<span>${a('label')}</span><i></i>`);
</script>
</body></html>
